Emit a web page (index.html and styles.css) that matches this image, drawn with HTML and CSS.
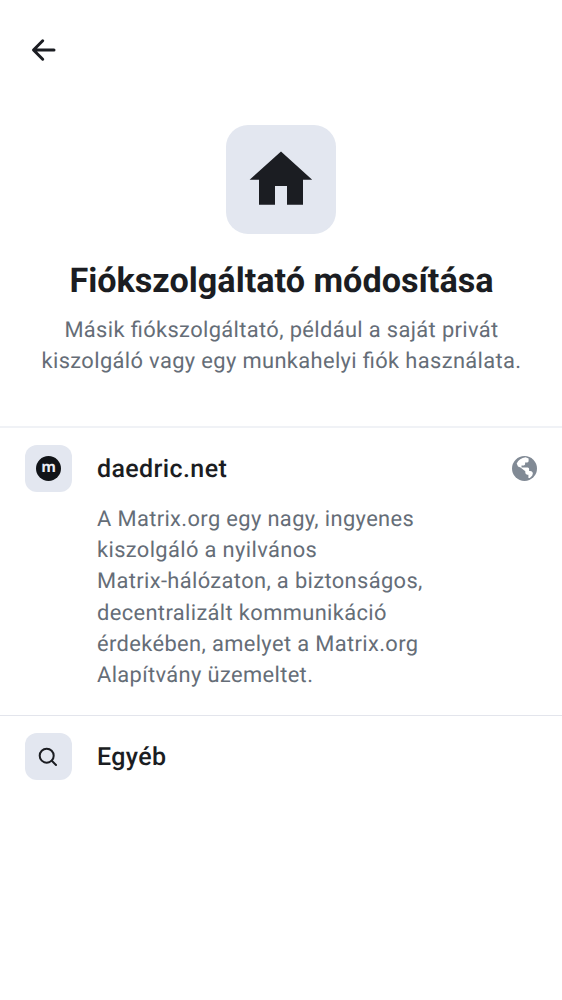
FILE: index.html
```html
<!DOCTYPE html>
<html lang="hu">
<head>
<meta charset="utf-8">
<title>Fiókszolgáltató módosítása</title>
<link rel="stylesheet" href="styles.css">
</head>
<body>
<header class="topbar">
  <svg class="back" width="25" height="24" viewBox="0 0 25 24"><path d="M23 12H3M11.7 2.8 2.5 12l9.2 9.2" fill="none" stroke="currentColor" stroke-width="3" stroke-linecap="round" stroke-linejoin="round"/></svg>
</header>
<section class="hero">
  <div class="hero-icon">
    <svg width="64" height="54" viewBox="0 0 64 54"><path d="M32 0.4 63.2 28.8H54V53.7H38V35H26V53.7H10V28.8H.6Z" fill="currentColor"/></svg>
  </div>
  <h1 class="title">Fiókszolgáltató módosítása</h1>
  <p class="subtitle">Másik fiókszolgáltató, például a saját privát<br>kiszolgáló vagy egy munkahelyi fiók használata.</p>
</section>
<main>
  <article class="item item-first">
    <div class="tile"><span class="logo">m</span></div>
    <div class="content">
      <h2 class="name">daedric.net</h2>
      <p class="desc">A Matrix.org egy nagy, ingyenes<br>kiszolgáló a nyilvános<br>Matrix-hálózaton, a biztonságos,<br>decentralizált kommunikáció<br>érdekében, amelyet a Matrix.org<br>Alapítvány üzemeltet.</p>
    </div>
    <svg class="globe" width="25" height="25" viewBox="0 0 25 25"><circle cx="12.5" cy="12.5" r="12.5" fill="#818a95"/><path d="M4.7 7.6C6.4 4 9.5 1.7 13.6 1.3L16.6 2.6V5.2Q16.4 6.6 14.8 6.6H13.1V8.3Q13 9.4 11.8 9.4H9.5V11.6H15.8Q17.1 11.7 17.1 13V15H18.3Q20.2 15.1 20.9 17L20.3 19.6 17.9 22.1 16.4 21.9V18.7H15.2Q13.3 18.5 13.3 16.5V15.2L8.5 11.4 6 10.6Z" fill="#fff"/></svg>
  </article>
  <article class="item">
    <div class="tile"><svg class="search" width="20" height="20" viewBox="0 0 20 20"><circle cx="8.7" cy="8.7" r="7" fill="none" stroke="currentColor" stroke-width="2"/><path d="m13.8 13.8 4.2 4.2" stroke="currentColor" stroke-width="2" stroke-linecap="round"/></svg></div>
    <div class="content"><h2 class="name">Egyéb</h2></div>
  </article>
</main>
</body>
</html>
```

FILE: styles.css
```css
* { box-sizing: border-box; }
body { margin: 0; height: 1000px; background: #fff; color: #1b1d22; font-family: Roboto, sans-serif; font-feature-settings: "liga" 1; text-rendering: geometricPrecision; }
h1, h2, p { margin: 0; }
svg { display: block; }
.topbar { height: 100px; padding: 38px 0 0 31px; }
.hero { display: flex; flex-direction: column; align-items: center; height: 326px; padding-top: 25px; text-align: center; }
.hero-icon { display: flex; justify-content: center; width: 110px; height: 109px; padding-top: 26px; border-radius: 22px; background: #e3e7f0; }
.title { margin-top: 26px; padding-left: 1px; font-size: 34.2px; line-height: 43px; font-weight: 700; white-space: nowrap; }
.subtitle { margin-top: 12px; padding-left: 1px; white-space: nowrap; }
.subtitle, .desc { color: #656d77; font-size: 21.86px; line-height: 31.2px; letter-spacing: .37px; }
.item { display: flex; align-items: flex-start; padding: 17px 25px 0; border-top: 1px solid #e3e5ec; }
.item-first { height: 289px; border-top: 2px solid #f0f2f6; }
.tile { display: flex; align-items: center; justify-content: center; flex: none; width: 47px; height: 47px; border-radius: 12px; background: #e3e7f0; }
.logo { width: 25px; height: 25px; border-radius: 50%; background: #101317; color: #e9ecf2; font: 700 15px/22px "Open Sans", sans-serif; text-align: center; }
.search { margin: 0 1px 0 0; }
.content { flex: 1; margin-left: 25px; }
.name { font-size: 25px; line-height: 49px; font-weight: 500; letter-spacing: .39px; }
.desc { margin-top: 10px; }
.globe { margin-top: 11px; }
```
